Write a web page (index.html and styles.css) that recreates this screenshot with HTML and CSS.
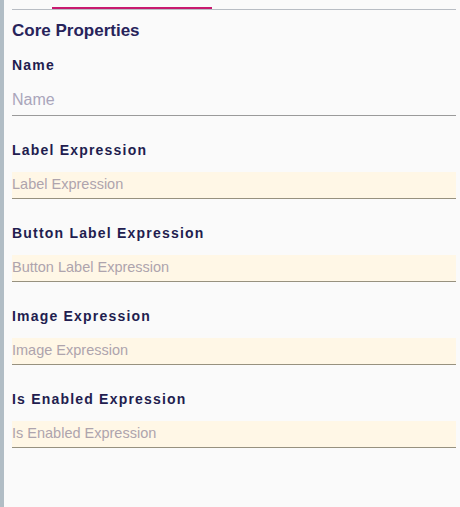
FILE: index.html
```html
<!DOCTYPE html>
<html>
<head>
<meta charset="utf-8">
<link rel="stylesheet" href="styles.css">
</head>
<body>
<div class="shell">
  <div class="sidebar"></div>
  <div class="panel">
    <div class="tabs"><div class="tab active"></div></div>
    <h2 class="section-title">Core Properties</h2>
    <div class="field">
      <label class="field-label">Name</label>
      <input class="text-input plain" placeholder="Name">
    </div>
    <div class="field">
      <label class="field-label">Label Expression</label>
      <input class="text-input expr" placeholder="Label Expression">
    </div>
    <div class="field">
      <label class="field-label">Button Label Expression</label>
      <input class="text-input expr" placeholder="Button Label Expression">
    </div>
    <div class="field">
      <label class="field-label">Image Expression</label>
      <input class="text-input expr" placeholder="Image Expression">
    </div>
    <div class="field">
      <label class="field-label">Is Enabled Expression</label>
      <input class="text-input expr" placeholder="Is Enabled Expression">
    </div>
  </div>
</div>
</body>
</html>
```

FILE: styles.css
```css
html, body {
  margin: 0;
  padding: 0;
  height: 100%;
  background: #fafafa;
  font-family: "Liberation Sans", Arial, sans-serif;
}
.shell {
  display: flex;
  height: 507px;
}
.sidebar {
  width: 4px;
  background: #b1bdc5;
  flex: none;
}
.panel {
  flex: 1;
  padding: 0 4px 0 8px;
}
.tabs {
  height: 9px;
  border-bottom: 1px solid #b8bdc4;
  display: flex;
}
.tab.active {
  margin-left: 40px;
  width: 160px;
  height: 2px;
  margin-top: 7px;
  background: #c8196f;
}
.section-title {
  margin: 11px 0 0;
  font-size: 17px;
  line-height: 20px;
  font-weight: bold;
  color: #27235a;
}
.field {
  display: flex;
  flex-direction: column;
}
.field-label {
  font-size: 14px;
  font-weight: bold;
  letter-spacing: 1.2px;
  color: #221d4f;
  line-height: 16px;
  margin-top: 16px;
}
.field + .field .field-label { margin-top: 26px; }
.text-input {
  border: none;
  border-bottom: 1px solid #9a9a9a;
  outline: none;
  padding: 0 0 2px 0;
  font-family: "Liberation Sans", Arial, sans-serif;
  width: 100%;
  box-sizing: border-box;
  margin-top: 14px;
}
.text-input.plain {
  background: transparent;
  font-size: 16px;
  height: 29px;
}
.text-input.plain::placeholder { color: #a9a5bb; }
.text-input.expr {
  background: #fff7e6;
  font-size: 14.5px;
  height: 27px;
  border-bottom-color: #97917f;
}
.text-input.expr::placeholder { color: #aea4ad; }
```
